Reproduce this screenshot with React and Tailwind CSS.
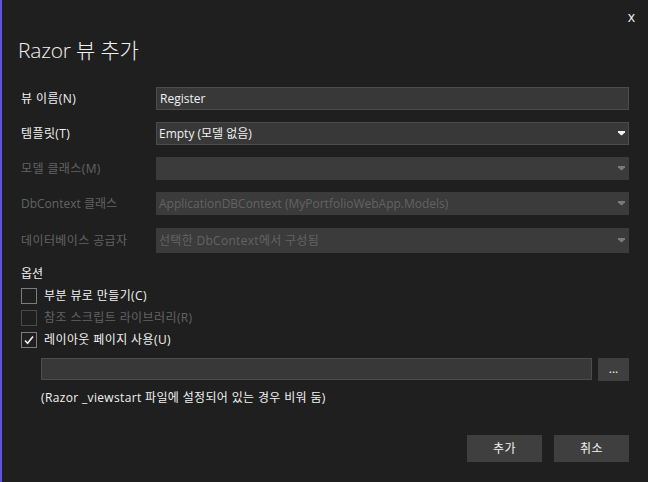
import React from "react";

const font = { fontFamily: '"Open Sans", "Noto Sans CJK KR", sans-serif' };

function Arrow({ disabled }) {
  return (
    <svg width="7" height="5" viewBox="0 0 7 5" className="shrink-0">
      <path d="M0 0H7V1.2L4 4.2H3L0 1.2Z" fill={disabled ? "#7a7a7a" : "#f1f1f1"} />
    </svg>
  );
}

function Check() {
  return (
    <svg width="12" height="12" viewBox="0 0 12 12">
      <path d="M2 6.5L4.6 9.2L10 2.6" fill="none" stroke="#f1f1f1" strokeWidth="1.6" />
    </svg>
  );
}

export default function App() {
  return (
    <div
      className="w-[648px] h-[482px] bg-[#1f1f1f] border-l-2 border-[#5f55e0] text-[#f1f1f1] text-[12px] flex flex-col pl-[19px] pr-[19px]"
      style={font}
    >
      <div className="h-[33px] flex items-center justify-end -mr-[6px]">
        <span className="text-[14px] leading-none">x</span>
      </div>
      <div className="h-[34px] flex items-center -ml-[3px]">
        <span className="text-[21px] font-light leading-none tracking-[-0.2px]">Razor 뷰 추가</span>
      </div>

      <div className="mt-[20px] grid grid-cols-[135px_1fr] gap-y-[12px]">
        <div className="h-[23px] flex items-center tracking-[0.4px]">뷰 이름(N)</div>
        <div className="h-[23px] bg-[#383838] border border-[#4c4c4c] flex items-center px-[3px]">Register</div>

        <div className="h-[23px] flex items-center tracking-[0.4px]">템플릿(T)</div>
        <div className="h-[23px] bg-[#383838] border border-[#4c4c4c] flex items-center justify-between pl-[2px] pr-[3px]">
          <span>Empty (모델 없음)</span>
          <Arrow />
        </div>

        <div className="h-[23px] flex items-center text-[#636363] tracking-[0.4px]">모델 클래스(M)</div>
        <div className="h-[23px] bg-[#3b3b3b] flex items-center justify-end pr-[4px]">
          <Arrow disabled />
        </div>

        <div className="h-[23px] flex items-center text-[#636363]">DbContext 클래스</div>
        <div className="h-[23px] bg-[#3b3b3b] flex items-center justify-between pl-[3px] pr-[4px] text-[#636363]">
          <span>ApplicationDBContext (MyPortfolioWebApp.Models)</span>
          <Arrow disabled />
        </div>

        <div className="h-[25px] mt-[1px] flex items-center text-[#636363] tracking-[0.4px]">데이터베이스 공급자</div>
        <div className="h-[25px] mt-[1px] bg-[#3b3b3b] flex items-center justify-between pl-[3px] pr-[4px] text-[#636363]">
          <span className="tracking-[0.3px]">선택한 DbContext에서 구성됨</span>
          <Arrow disabled />
        </div>
      </div>

      <div className="mt-[13px] h-[16px] flex items-center">옵션</div>

      <div className="mt-[6px] flex flex-col gap-[6px] tracking-[0.4px]">
        <div className="flex items-center gap-[7px] h-[16px]">
          <div className="w-[16px] h-[16px] border border-[#7d7d7d]" />
          <span>부분 뷰로 만들기(C)</span>
        </div>
        <div className="flex items-center gap-[7px] h-[16px] text-[#636363]">
          <div className="w-[16px] h-[16px] border border-[#4a4a4a]" />
          <span>참조 스크립트 라이브러리(R)</span>
        </div>
        <div className="flex items-center gap-[7px] h-[16px]">
          <div className="w-[16px] h-[16px] border border-[#7d7d7d] flex items-center justify-center">
            <Check />
          </div>
          <span>레이아웃 페이지 사용(U)</span>
        </div>
      </div>

      <div className="mt-[10px] ml-[20px] flex gap-[6px]">
        <div className="flex-1 h-[22px] bg-[#383838] border border-[#4c4c4c]" />
        <div className="w-[31px] h-[23px] bg-[#3f3f3f] flex items-center justify-center leading-none pb-[2px]">...</div>
      </div>

      <div className="mt-[8px] ml-[20px] h-[18px] flex items-center tracking-[0.35px]">(Razor _viewstart 파일에 설정되어 있는 경우 비워 둠)</div>

      <div className="mt-[28px] flex justify-end gap-[12px]">
        <div className="w-[75px] h-[27px] bg-[#3f3f3f] flex items-center justify-center tracking-[0.5px]">추가</div>
        <div className="w-[75px] h-[27px] bg-[#3f3f3f] flex items-center justify-center tracking-[0.5px]">취소</div>
      </div>
    </div>
  );
}
